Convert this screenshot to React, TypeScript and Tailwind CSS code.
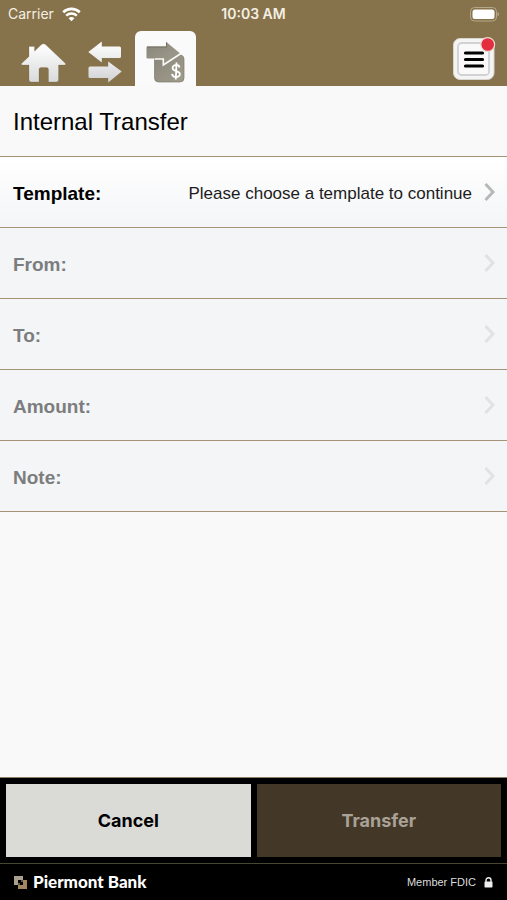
import { useState } from "react";

const fields = [
  { label: "Template:", value: "Please choose a template to continue", enabled: true },
  { label: "From:", value: "", enabled: false },
  { label: "To:", value: "", enabled: false },
  { label: "Amount:", value: "", enabled: false },
  { label: "Note:", value: "", enabled: false },
];

function StatusBar() {
  return (
    <div className="grid h-7 grid-cols-3 items-center px-2 font-[Inter,sans-serif] text-sm text-[#f5efe2]">
      <div className="flex items-center gap-2">
        <span>Carrier</span>
        <svg width="19" height="15" viewBox="0 0 19 15" fill="none" stroke="#fff" aria-hidden="true">
          <path d="M1.2 5.2C6 .7 13 .7 17.8 5.2" strokeWidth="2.6" />
          <path d="M4.2 8.6c3-2.7 7.6-2.7 10.6 0" strokeWidth="2.5" />
          <path d="M9.5 14.2 6.6 11.2c1.7-1.5 4.1-1.5 5.8 0Z" fill="#fff" stroke="none" />
        </svg>
      </div>
      <span className="text-center font-semibold">10:03 AM</span>
      <svg className="justify-self-end" width="29" height="15" viewBox="0 0 29 15" aria-hidden="true">
        <rect x=".5" y=".5" width="26" height="13.5" rx="4" fill="none" stroke="#b5a888" />
        <rect x="2.5" y="2.5" width="22" height="9.5" rx="2.5" fill="#fff" />
        <path d="M27.5 5v4.5c1-.5 1.500-1.200 1.500-2.200S28.500 5.500 27.500 5Z" fill="#b5a888" />
      </svg>
    </div>
  );
}

function HomeIcon() {
  return (
    <svg width="45" height="40" viewBox="0 0 45 40" aria-hidden="true">
      <defs>
        <linearGradient id="home" x1="0" y1="0" x2="0" y2="1">
          <stop offset="0" stopColor="#fff" />
          <stop offset="1" stopColor="#d9dadb" />
        </linearGradient>
      </defs>
      <path
        d="M20.5 1.6Q22.5 0 24.5 1.6L44.5 20.5Q45 22 43.5 22H37.5V36.5Q37.5 39 35 39H27.5V26.5Q27.5 24.5 25.5 24.5H20Q18 24.5 18 26.5V39H10.500Q8 39 8 36.5V22H1.5Q0 22 .5 20.5L8 13.5V3.5H13.5V8.3Z"
        fill="url(#home)"
        stroke="#6f5d3c"
        strokeOpacity=".35"
        strokeWidth=".6"
      />
    </svg>
  );
}

function ArrowsIcon() {
  return (
    <svg width="34" height="42" viewBox="0 0 34 42" aria-hidden="true">
      <defs>
        <linearGradient id="arrow-left" x1="0" y1="0" x2="0" y2="1">
          <stop offset="0" stopColor="#fff" />
          <stop offset="1" stopColor="#e6e7e8" />
        </linearGradient>
        <linearGradient id="arrow-right" x1="0" y1="0" x2="0" y2="1">
          <stop offset="0" stopColor="#ececed" />
          <stop offset="1" stopColor="#d0d1d3" />
        </linearGradient>
      </defs>
      <path
        d="M.3 11 13.8.4V5.5H31.5Q33 5.5 33 7V15.5Q33 17 31.5 17H13.8V21.5Z"
        fill="url(#arrow-left)"
      />
      <path
        d="M33.7 30.5 20.2 20.5V25.5H2Q.5 25.5.5 27V35.5Q.5 37 2 37H20.2V41.5Z"
        fill="url(#arrow-right)"
      />
    </svg>
  );
}

function TransferIcon() {
  return (
    <svg width="39" height="42" viewBox="0 0 39 42" aria-hidden="true">
      <defs>
        <linearGradient id="transfer" x1="0" y1="0" x2="1" y2="1">
          <stop offset="0" stopColor="#88857a" />
          <stop offset="1" stopColor="#a29e8d" />
        </linearGradient>
      </defs>
      <path
        d="M8.500 14H35Q38 15 38 18V37Q38 41 34 41H12.5Q8.5 41 8.5 37Z"
        fill="url(#transfer)"
        stroke="#7e7a68"
        strokeWidth=".7"
      />
      <path
        d="M.5 6.5Q.5 5.5 1.5 5.5H20V.7L34.2 12.500 17.5 23.8V17.5H1.5Q.5 17.5.5 16.5Z"
        fill="url(#transfer)"
      />
      <path d="M8.500 18H17.300V24L35 12.500" fill="none" stroke="#fafafa" strokeWidth="1.600" />
      <path d="M1 6H20.5V1.6" fill="none" stroke="#6f6c5d" strokeWidth=".9" />
      <path
        d="M33.5 26.5c-.4-1.9-1.8-2.7-3.6-2.5-2.2.2-3.5 1.6-3.3 3.3.5 3.4 7 2.2 7.3 5.6.1 2-1.7 3.2-3.9 3.2-2 0-3.6-1-4-3.2M30.5 21.5 29.8 38.5"
        fill="none"
        stroke="#fff"
        strokeWidth="1.8"
      />
    </svg>
  );
}

function Chevron({ enabled }: { enabled: boolean }) {
  return (
    <svg
      className={enabled ? "mb-1 text-[#b8b8b8]" : "mb-1 text-[#e0e2e3]"}
      width="11"
      height="18"
      viewBox="0 0 11 18"
      fill="none"
      stroke="currentColor"
      strokeWidth="3"
      aria-hidden="true"
    >
      <path d="M1.5 1 9 9l-7.5 8" />
    </svg>
  );
}

function Header() {
  const [tab, setTab] = useState("internal");

  return (
    <header className="bg-[#86734c]">
      <StatusBar />
      <div className="flex h-[58px] items-end justify-between pr-2.5 pl-[21px]">
        <nav className="flex items-end" aria-label="Main">
          <button className="pb-[3px]" aria-label="Home" onClick={() => setTab("home")}>
            <HomeIcon />
          </button>
          <button className="pr-[13px] pb-[3px] pl-[22px]" aria-label="Transfers" onClick={() => setTab("transfers")}>
            <ArrowsIcon />
          </button>
          <button
            className="rounded-t-md bg-[#fafafa] px-[11px] pt-2.5 pb-[3px]"
            aria-label="Internal transfer"
            aria-current={tab === "internal" ? "page" : undefined}
            onClick={() => setTab("internal")}
          >
            <TransferIcon />
          </button>
        </nav>
        <button className="pb-1.5" aria-label="Menu">
          <svg width="44" height="44" viewBox="0 0 44 44" aria-hidden="true">
            <rect x=".5" y="2.5" width="40.5" height="41" rx="6.5" fill="#f4f4f4" stroke="#d8d5cf" />
            <rect x="5" y="7" width="31" height="32" rx="3.5" fill="#f9f9f9" stroke="#d2d2d4" strokeWidth="1.8" />
            <path d="M12.5 17h17M12.5 23.500h17M12.5 30h17" stroke="#000" strokeWidth="3.2" strokeLinecap="round" />
            <circle cx="34.7" cy="8.5" r="6.9" fill="#e52d40" stroke="#e9dcd4" strokeWidth="1.2" />
          </svg>
        </button>
      </div>
    </header>
  );
}

export default function App() {
  return (
    <div className="flex min-h-screen flex-col bg-[#f9f9f9] font-['Liberation_Sans',Arial,sans-serif] text-black">
      <Header />

      <main className="flex flex-1 flex-col">
        <h1 className="border-b border-[#a59378] px-[13px] pt-5 pb-[18px] text-2xl leading-8">
          Internal Transfer
        </h1>

        {fields.map((field) => (
          <button
            key={field.label}
            disabled={!field.enabled}
            className={
              field.enabled
                ? "flex h-[71px] items-center border-b border-[#a59378] bg-linear-to-b from-white to-[#f4f5f7] px-3 pt-1 text-left"
                : "flex h-[71px] items-center border-b border-[#a59378] bg-[#f4f5f7] px-3 pt-1 text-left text-[#7c7d7e]"
            }
          >
            <span className="flex-1 pl-px text-[19px] font-bold">{field.label}</span>
            <span className="mr-3 text-[17px] text-[#1c1c1c]">{field.value}</span>
            <Chevron enabled={field.enabled} />
          </button>
        ))}
      </main>

      <div className="grid grid-cols-2 gap-1.5 border-t border-[#8d7c66] bg-black px-1.5 py-1.5 font-[Inter,sans-serif] text-lg font-bold">
        <button className="h-[73px] bg-[#dadbd7]">Cancel</button>
        <button className="h-[73px] bg-[#433827] text-[#aaa197]" disabled>
          Transfer
        </button>
      </div>

      <footer className="flex h-[37px] items-center justify-between border-t border-[#474630] bg-black px-3.5 text-white">
        <div className="flex items-center gap-1.5">
          <svg width="13" height="13" viewBox="0 0 13 13" aria-hidden="true">
            <path d="M0 0h9v4H4v5H0Z" fill="#a9a08e" />
            <path d="M13 4v9H4V9h5V4Z" fill="#a18660" />
            <path d="M4 7h2v2H4ZM7 4h2v2H7Z" fill="#5f5543" />
          </svg>
          <span className="font-[Lato,sans-serif] text-[17px] font-black">Piermont Bank</span>
        </div>
        <div className="flex items-center gap-2 text-[#dcdcdc]">
          <span className="text-[11px]">Member FDIC</span>
          <svg width="9" height="11" viewBox="0 0 9 11" aria-hidden="true">
            <path d="M2 5V3.2a2.5 2.5 0 0 1 5 0V5" fill="none" stroke="#eee" strokeWidth="1.4" />
            <rect x=".5" y="4.6" width="8" height="6" rx=".8" fill="#eee" />
          </svg>
        </div>
      </footer>
    </div>
  );
}
